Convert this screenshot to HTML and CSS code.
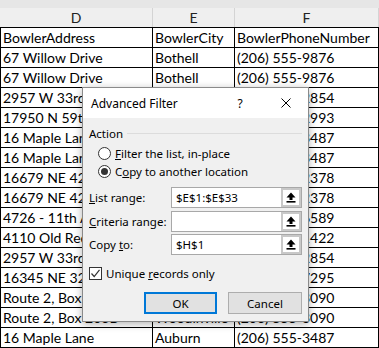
FILE: index.html
```html
<!DOCTYPE html>
<html lang="en">
<head>
    <meta charset="UTF-8">
    <title>Advanced Filter</title>
    <link rel="stylesheet" href="styles.css">
</head>
<body>
    <div class="sheet">
        <div class="strip"></div>
        <div class="colheads">
            <div class="colhead">D</div>
            <div class="colhead">E</div>
            <div class="colhead">F</div>
        </div>
        <div class="grid">
            <div class="cell">BowlerAddress</div><div class="cell">BowlerCity</div><div class="cell">BowlerPhoneNumber</div>
            <div class="cell">67 Willow Drive</div><div class="cell">Bothell</div><div class="cell">(206) 555-9876</div>
            <div class="cell">67 Willow Drive</div><div class="cell">Bothell</div><div class="cell">(206) 555-9876</div>
            <div class="cell">2957 W 33rd St</div><div class="cell">Seattle</div><div class="cell">(206) 555-2854</div>
            <div class="cell">17950 N 59th</div><div class="cell">Seattle</div><div class="cell">(206) 555-2993</div>
            <div class="cell">16 Maple Lane</div><div class="cell">Auburn</div><div class="cell">(206) 555-3487</div>
            <div class="cell">16 Maple Lane</div><div class="cell">Auburn</div><div class="cell">(206) 555-3487</div>
            <div class="cell">16679 NE 42nd Ct</div><div class="cell">Redmond</div><div class="cell">(206) 555-2378</div>
            <div class="cell">16679 NE 42nd Ct</div><div class="cell">Redmond</div><div class="cell">(206) 555-2378</div>
            <div class="cell">4726 - 11th Ave NE</div><div class="cell">Seattle</div><div class="cell">(206) 555-6589</div>
            <div class="cell">4110 Old Redmond Rd</div><div class="cell">Redmond</div><div class="cell">(206) 555-1422</div>
            <div class="cell">2957 W 33rd</div><div class="cell">Ballard</div><div class="cell">(206) 555-2854</div>
            <div class="cell">16345 NE 32nd St</div><div class="cell">Bellevue</div><div class="cell">(206) 555-7295</div>
            <div class="cell">Route 2, Box 203B</div><div class="cell">Woodinville</div><div class="cell">(206) 555-3090</div>
            <div class="cell">Route 2, Box 203B</div><div class="cell">Woodinville</div><div class="cell">(206) 555-3090</div>
            <div class="cell">16 Maple Lane</div><div class="cell">Auburn</div><div class="cell">(206) 555-3487</div>
        </div>
    </div>

    <div class="dialog">
        <div class="titlebar">
            <span class="title">Advanced Filter</span>
            <span class="help">?</span>
            <svg class="close" width="10" height="10" viewBox="0 0 10 10">
                <path d="M0.5 0.5 L9.5 9.5 M9.5 0.5 L0.5 9.5" stroke="#000" stroke-width="1" fill="none"/>
            </svg>
        </div>
        <div class="body">
            <div class="legend">
                <span>Action</span>
                <span class="rule"></span>
            </div>
            <div class="radios">
                <div class="option">
                    <span class="radio"></span>
                    <span><u>F</u>ilter the list, in-place</span>
                </div>
                <div class="option">
                    <span class="radio checked"></span>
                    <span>C<u>o</u>py to another location</span>
                </div>
            </div>
            <div class="fields">
                <div class="field-row">
                    <span class="field-label"><u>L</u>ist range:</span>
                    <div class="field">
                        <span class="field-text">$E$1:$E$33</span>
                        <span class="pick"><svg width="10" height="11" viewBox="0 0 10 11"><path d="M5 0.5 L9.5 5.5 H6.5 V8 H3.5 V5.5 H0.5 Z" fill="#000"/><rect x="0.5" y="9" width="9" height="1.6" fill="#000"/></svg></span>
                    </div>
                </div>
                <div class="field-row">
                    <span class="field-label"><u>C</u>riteria range:</span>
                    <div class="field">
                        <span class="field-text"></span>
                        <span class="pick"><svg width="10" height="11" viewBox="0 0 10 11"><path d="M5 0.5 L9.5 5.5 H6.5 V8 H3.5 V5.5 H0.5 Z" fill="#000"/><rect x="0.5" y="9" width="9" height="1.6" fill="#000"/></svg></span>
                    </div>
                </div>
                <div class="field-row">
                    <span class="field-label">Copy <u>t</u>o:</span>
                    <div class="field">
                        <span class="field-text">$H$1</span>
                        <span class="pick"><svg width="10" height="11" viewBox="0 0 10 11"><path d="M5 0.5 L9.5 5.5 H6.5 V8 H3.5 V5.5 H0.5 Z" fill="#000"/><rect x="0.5" y="9" width="9" height="1.6" fill="#000"/></svg></span>
                    </div>
                </div>
            </div>
            <div class="check-row">
                <span class="checkbox"><svg width="11" height="11" viewBox="0 0 11 11"><path d="M1.5 5.5 L4.2 8.5 L9.5 1.8" stroke="#333" stroke-width="1.2" fill="none"/></svg></span>
                <span>Unique <u>r</u>ecords only</span>
            </div>
            <div class="buttons">
                <button class="btn default">OK</button>
                <button class="btn">Cancel</button>
            </div>
        </div>
    </div>
</body>
</html>
```

FILE: styles.css
```css
body {
    margin: 0;
    font-family: Lato, sans-serif;
    background: #fff;
}

.sheet {
    width: 379px;
    height: 348px;
    overflow: hidden;
}

.strip {
    height: 8px;
    background: #e6e6e6;
}

.colheads {
    display: grid;
    grid-template-columns: 153px 82px 144px;
    height: 19px;
    background: #efefef;
}

.colhead {
    border-right: 1px solid #d4d4d4;
    font-size: 14px;
    line-height: 19px;
    text-align: center;
    color: #222;
}

.grid {
    display: grid;
    grid-template-columns: 152px 82px 144px;
    border-left: 1px solid #000;
    border-top: 1px solid #000;
}

.cell {
    height: 19px;
    padding: 0 2px;
    border-right: 1px solid #000;
    border-bottom: 1px solid #000;
    font-size: 14px;
    line-height: 19px;
    white-space: nowrap;
    overflow: hidden;
    color: #000;
}

.dialog {
    position: absolute;
    left: 82px;
    top: 87px;
    width: 227px;
    height: 235px;
    box-sizing: border-box;
    border: 1px solid #8a8a8a;
    background: #f0f0f0;
    box-shadow: 0 2px 8px rgba(0, 0, 0, 0.3);
    font-family: "Noto Sans", sans-serif;
    font-size: 11.5px;
    color: #000;
}

.titlebar {
    display: flex;
    align-items: center;
    height: 30px;
    padding-left: 8px;
    background: #fff;
    font-size: 12px;
}

.title {
    flex: 1;
}

.help {
    width: 8px;
    margin-right: 37px;
    text-align: center;
}

.close {
    margin-right: 17px;
}

.body {
    padding: 6px 6px 0 6px;
}

.legend {
    display: flex;
    align-items: center;
    height: 18px;
}

.rule {
    flex: 1;
    height: 1px;
    margin-left: 4px;
    background: #dcdcdc;
}

.radios {
    margin-top: 2.5px;
    padding-left: 9px;
}

.option {
    display: flex;
    align-items: center;
    height: 18px;
}

.radio {
    width: 13px;
    height: 13px;
    box-sizing: border-box;
    margin-right: 4px;
    border: 1px solid #333;
    border-radius: 50%;
    background: #fff;
    display: flex;
    align-items: center;
    justify-content: center;
}

.radio.checked::after {
    content: "";
    width: 7px;
    height: 7px;
    border-radius: 50%;
    background: #333;
}

.fields {
    margin-top: 6.5px;
    display: flex;
    flex-direction: column;
    gap: 2.5px;
}

.field-row {
    display: flex;
    align-items: center;
    height: 21px;
}

.field-label {
    width: 82px;
}

.field {
    flex: 1;
    display: flex;
    align-items: stretch;
    height: 21px;
    box-sizing: border-box;
    border: 1px solid #a8a8a8;
    background: #fff;
}

.field-text {
    flex: 1;
    padding-left: 4px;
    line-height: 19px;
}

.pick {
    width: 20px;
    box-sizing: border-box;
    border: 2px solid #c8c8c8;
    background: #fff;
    display: flex;
    align-items: center;
    justify-content: center;
}

.check-row {
    display: flex;
    align-items: center;
    height: 18px;
    margin-top: 9px;
}

.checkbox {
    width: 13px;
    height: 13px;
    box-sizing: border-box;
    margin-right: 4px;
    border: 1px solid #333;
    background: #fff;
    display: flex;
    align-items: center;
    justify-content: center;
}

.buttons {
    display: flex;
    justify-content: flex-end;
    gap: 11px;
    margin-top: 10px;
}

.btn {
    height: 22px;
    width: 74px;
    box-sizing: border-box;
    border: 1px solid #adadad;
    background: #e1e1e1;
    font-family: "Noto Sans", sans-serif;
    font-size: 11.5px;
    color: #000;
    padding: 0;
}

.btn.default {
    width: 73px;
    border: 2px solid #0078d7;
}
```
